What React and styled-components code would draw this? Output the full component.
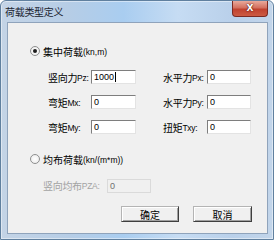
import React from "react";
import styled, { createGlobalStyle } from "styled-components";

const GlobalStyle = createGlobalStyle`
  html, body {
    margin: 0;
    padding: 0;
    background: #ffffff;
  }
  body {
    font-family: "Noto Sans CJK SC", "Liberation Sans", sans-serif;
    color: #000;
  }
`;

const Window = styled.div`
  width: 274px;
  height: 240px;
  box-sizing: border-box;
  display: flex;
  flex-direction: column;
  border: 1px solid #60809f;
  border-radius: 6px 6px 0 0;
  background: linear-gradient(
    to right,
    #c4d4e6 0%,
    #b6cde6 25%,
    #a9cdf0 45%,
    #c6dcf3 65%,
    #b9d0ea 85%,
    #c2d5ea 100%
  );
  box-shadow: inset 0 0 0 1px rgba(255, 255, 255, 0.45);
  overflow: hidden;
`;

const TitleBar = styled.div`
  height: 21px;
  display: flex;
  align-items: flex-start;
  justify-content: space-between;
  flex-shrink: 0;
`;

const Title = styled.span`
  margin: 4px 0 0 4px;
  font-size: 10px;
  line-height: 13px;
  color: #1b2430;
  letter-spacing: -0.3px;
`;

const CloseButton = styled.div`
  width: 36px;
  height: 16px;
  margin-right: 5px;
  box-sizing: border-box;
  display: flex;
  align-items: center;
  justify-content: center;
  border: 1px solid #7c2a22;
  border-top: none;
  border-radius: 0 0 4px 4px;
  background: linear-gradient(to bottom, #e9a99b 0%, #d3705f 45%, #c0422f 55%, #cc5b43 100%);
  color: #fff;
  font-family: "DejaVu Sans", sans-serif;
  font-size: 9px;
  font-weight: bold;
  line-height: 1;
  text-shadow: 0 0 2px #5a1a12, 0 0 1px #5a1a12;
`;

const Client = styled.div`
  flex: 1;
  margin: 0 5px 5px 6px;
  border: 1px solid #8fa3bb;
  background: #f0f0f0;
  padding: 0 15px 0 22px;
  display: flex;
  flex-direction: column;
`;

const RadioRow = styled.div`
  height: 14px;
  margin-top: ${(p) => p.$top}px;
  display: flex;
  align-items: center;
  gap: 3px;
  font-size: 10px;
`;

const Radio = styled.span`
  width: 10px;
  height: 10px;
  box-sizing: border-box;
  border-radius: 50%;
  border: 1px solid #8e8f8f;
  background: radial-gradient(circle, #ffffff 0%, #e9e9e9 100%);
  display: flex;
  align-items: center;
  justify-content: center;

  &::after {
    content: "";
    width: 4px;
    height: 4px;
    border-radius: 50%;
    background: ${(p) => (p.$checked ? "#1c1c1c" : "transparent")};
  }
`;

const Latin = styled.span`
  font-family: "Liberation Sans", sans-serif;
  font-size: 8.5px;
  vertical-align: 1px;
`;

const FieldGrid = styled.div`
  margin: 12px 0 0 18px;
  display: grid;
  grid-template-columns: 43px 72px 44px 44px;
  grid-auto-rows: 14px;
  row-gap: 11px;
  align-items: center;
`;

const Label = styled.span`
  font-size: 10px;
  white-space: nowrap;
  color: ${(p) => (p.$disabled ? "#a3a3a3" : "#000")};
  letter-spacing: -0.3px;
`;

const Field = styled.div`
  width: ${(p) => p.$width}px;
  height: 14px;
  box-sizing: border-box;
  display: flex;
  align-items: center;
  padding-left: 2px;
  border: 1px solid;
  border-color: ${(p) =>
    p.$disabled ? "#dadada" : "#7e7e7e #e3e3e3 #e3e3e3 #7e7e7e"};
  background: ${(p) => (p.$disabled ? "#f0f0f0" : "#ffffff")};
  color: ${(p) => (p.$disabled ? "#6f6f6f" : "#000")};
  font-family: "Liberation Sans", sans-serif;
  font-size: 9px;
`;

const Caret = styled.span`
  width: 1px;
  height: 10px;
  margin-left: 1px;
  background: #000;
`;

const DistRow = styled.div`
  margin: 12px 0 0 13px;
  height: 14px;
  display: grid;
  grid-template-columns: 64px 44px;
  align-items: center;
`;

const ButtonRow = styled.div`
  margin-top: 14px;
  display: flex;
  justify-content: flex-end;
  gap: 14px;
`;

const Button = styled.div`
  width: ${(p) => p.$width}px;
  height: 16px;
  box-sizing: border-box;
  display: flex;
  align-items: center;
  justify-content: center;
  border: 1px solid;
  border-color: #b4b4b4 #3f3f3f #3f3f3f #b4b4b4;
  box-shadow: inset 1px 1px 0 #ffffff, inset -1px -1px 0 #a0a0a0;
  background: #f0f0f0;
  font-size: 10px;
`;

const rows = [
  { left: "竖向力", leftLatin: "Pz:", leftValue: "1000", caret: true, right: "水平力", rightLatin: "Px:", rightValue: "0" },
  { left: "弯矩", leftLatin: "Mx:", leftValue: "0", right: "水平力", rightLatin: "Py:", rightValue: "0" },
  { left: "弯矩", leftLatin: "My:", leftValue: "0", right: "扭矩", rightLatin: "Txy:", rightValue: "0" },
];

export default function App() {
  return (
    <>
      <GlobalStyle />
      <Window>
        <TitleBar>
          <Title>荷载类型定义</Title>
          <CloseButton>X</CloseButton>
        </TitleBar>
        <Client>
          <RadioRow $top={21}>
            <Radio $checked />
            <span>
              集中荷载<Latin>(kn,m)</Latin>
            </span>
          </RadioRow>
          <FieldGrid>
            {rows.map((r) => (
              <React.Fragment key={r.leftLatin}>
                <Label>
                  {r.left}
                  <Latin>{r.leftLatin}</Latin>
                </Label>
                <Field $width={45}>
                  {r.leftValue}
                  {r.caret && <Caret />}
                </Field>
                <Label>
                  {r.right}
                  <Latin>{r.rightLatin}</Latin>
                </Label>
                <Field $width={44}>{r.rightValue}</Field>
              </React.Fragment>
            ))}
          </FieldGrid>
          <RadioRow $top={18}>
            <Radio />
            <span>
              均布荷载<Latin>(kn/(m*m))</Latin>
            </span>
          </RadioRow>
          <DistRow>
            <Label $disabled>
              竖向均布<Latin>PZA:</Latin>
            </Label>
            <Field $width={44} $disabled>
              0
            </Field>
          </DistRow>
          <ButtonRow>
            <Button $width={58}>确定</Button>
            <Button $width={59}>取消</Button>
          </ButtonRow>
        </Client>
      </Window>
    </>
  );
}
